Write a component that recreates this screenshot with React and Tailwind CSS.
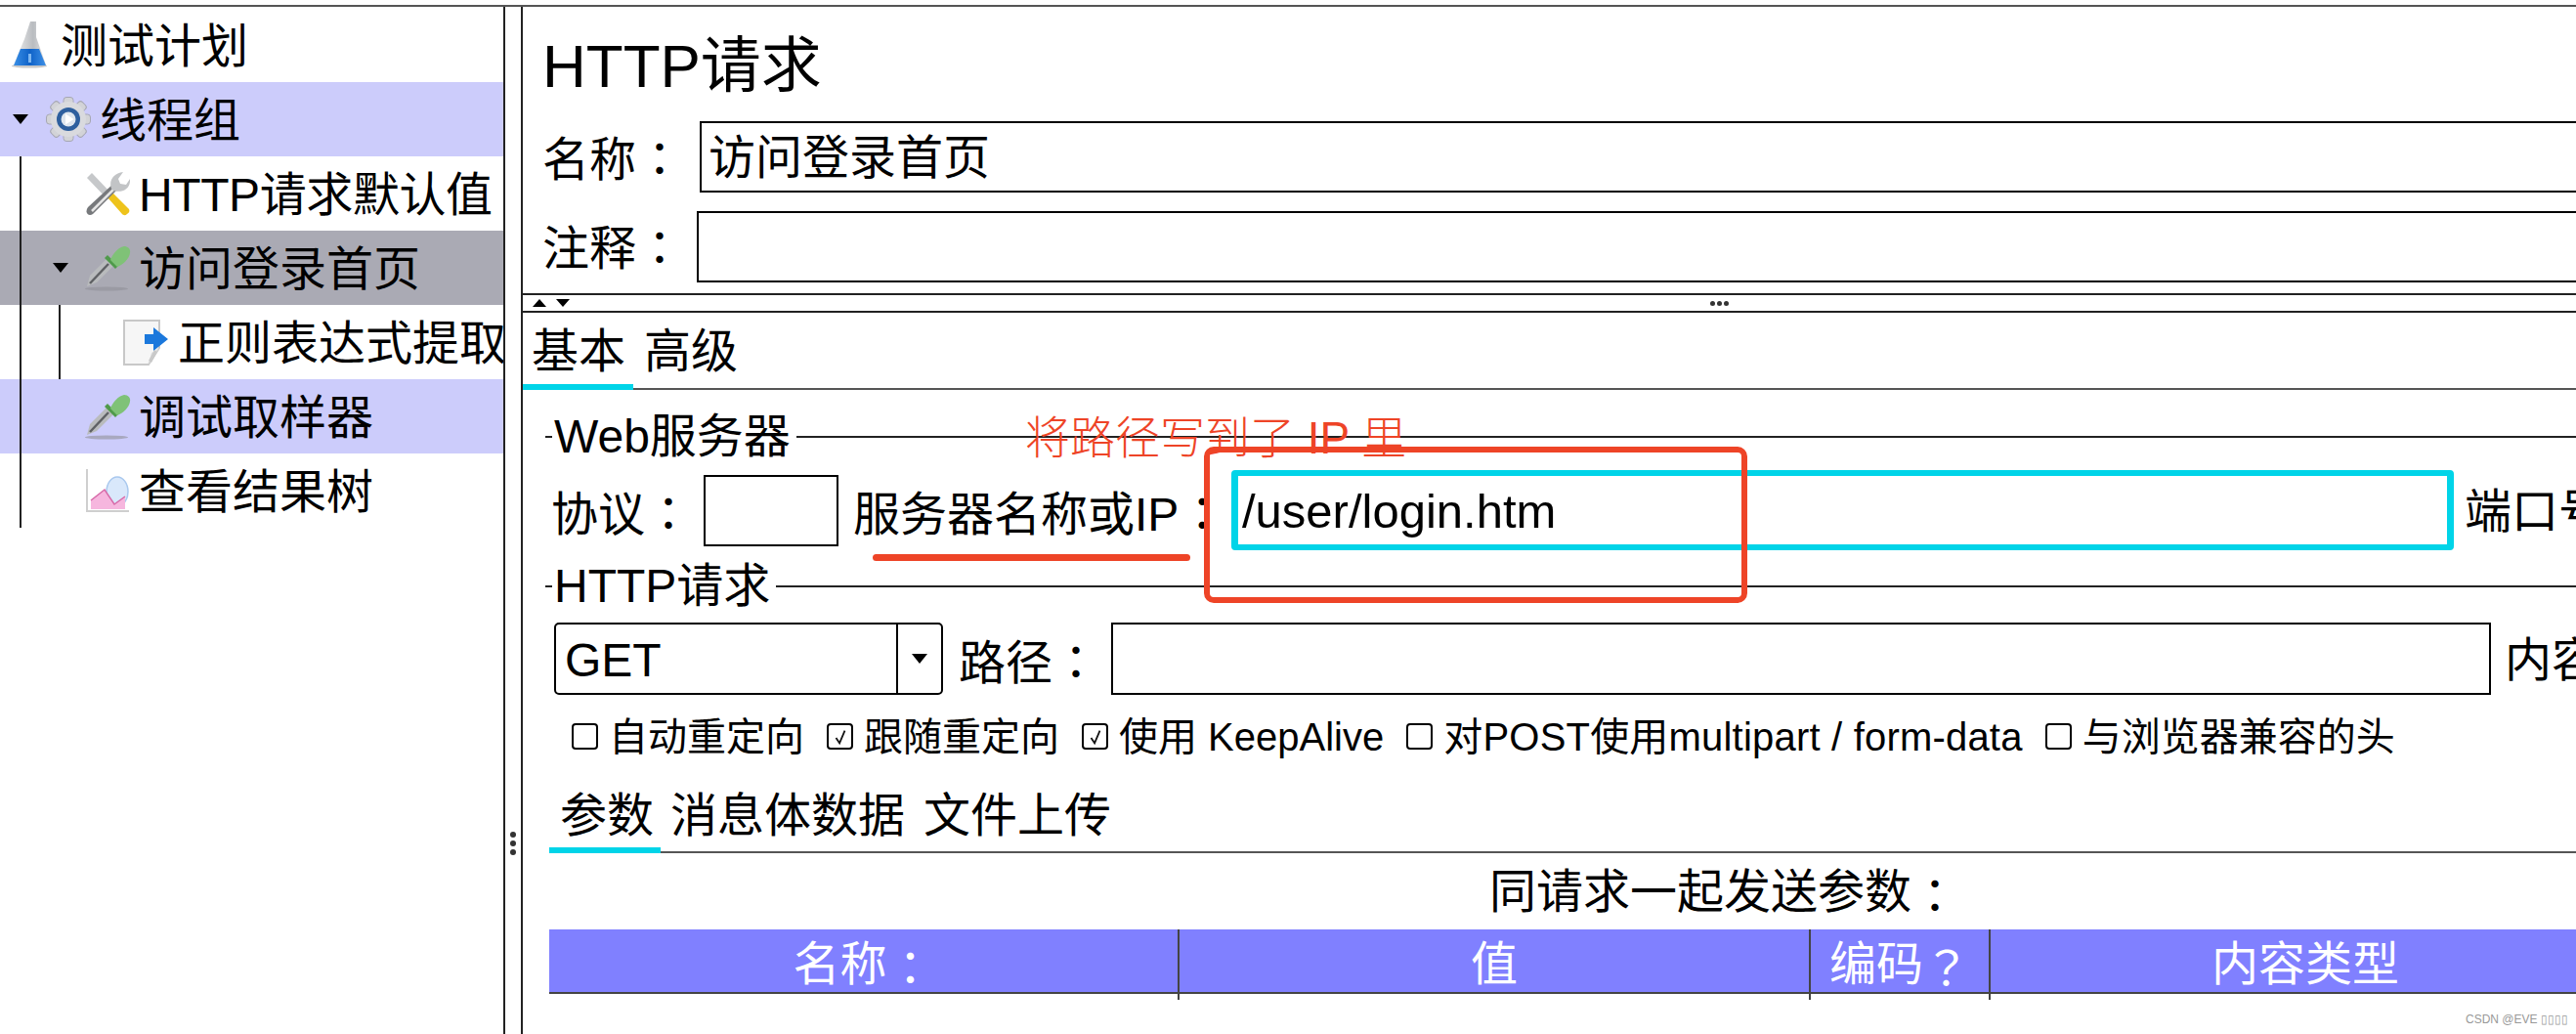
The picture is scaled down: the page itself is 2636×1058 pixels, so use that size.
import React from "react";

const Colon = () => <span className="font-['Noto_Sans_CJK_TC']">：</span>;

const CaretDown = ({ className = "" }) => (
  <span
    className={`block w-0 h-0 border-x-[8px] border-t-[10px] border-x-transparent border-t-black ${className}`}
  />
);

const FlaskIcon = () => (
  <svg viewBox="0 0 36 48" className="w-[36px] h-[48px] mr-[14px] shrink-0 blur-[0.5px]">
    <defs>
      <linearGradient id="glass" x1="0" x2="1">
        <stop offset="0" stopColor="#f2f2f2" />
        <stop offset="0.6" stopColor="#b9bcc0" />
        <stop offset="1" stopColor="#e6e6e6" />
      </linearGradient>
      <linearGradient id="liquid" x1="0" x2="1">
        <stop offset="0" stopColor="#3a8fe6" />
        <stop offset="0.5" stopColor="#0f62c8" />
        <stop offset="1" stopColor="#3d8fe6" />
      </linearGradient>
    </defs>
    <ellipse cx="18" cy="45.5" rx="18" ry="2" fill="#c8c8c8" />
    <path d="M19 0h6v16l10 28H2l11-26z" fill="url(#glass)" />
    <path d="M9 28h19l7 17H2z" fill="url(#liquid)" />
    <rect x="17" y="33" width="3" height="9" fill="#7db6f0" />
  </svg>
);

const GearIcon = () => (
  <svg viewBox="0 0 46 46" className="w-[46px] h-[46px] mr-[9px] shrink-0 blur-[0.5px]">
    <g fill="#d2d3d7" stroke="#a6a7b4" strokeWidth="1">
      <rect x="18" y="0.5" width="10" height="45" rx="3" />
      <rect x="0.5" y="18" width="45" height="10" rx="3" />
      <rect x="18" y="0.5" width="10" height="45" rx="3" transform="rotate(45 23 23)" />
      <rect x="18" y="0.5" width="10" height="45" rx="3" transform="rotate(-45 23 23)" />
    </g>
    <circle cx="23" cy="23" r="18" fill="#d9dade" />
    <circle cx="23" cy="23" r="12" fill="#2e5f9e" />
    <circle cx="23" cy="23" r="7.5" fill="#dfe6ee" />
    <path d="M20 17.5l8.5 5.5-8.5 5.5z" fill="#ffffff" />
  </svg>
);

const ToolsIcon = () => (
  <svg viewBox="0 0 46 47" className="w-[46px] h-[47px] mr-[9px] shrink-0 blur-[0.5px]">
    <path d="M2 7l5-5 21 22-5 5z" fill="#c6c8ca" />
    <path d="M23 27l5-5 17 17c1 2 0 4-2 5-2 2-4 1-5 0z" fill="#eec31c" />
    <path d="M3 37l27-25 5 5-27 27c-4 3-9-1-5-7z" fill="#77797c" />
    <path d="M7 41l25-25" stroke="#e5e5e5" strokeWidth="2.5" />
    <path d="M27 18c-3-8 2-16 12-17l-5 7 2 5 6 1 4-6c1 10-8 15-17 12z" fill="#c2c4c6" />
  </svg>
);

const DropperIcon = () => (
  <svg viewBox="0 0 47 47" className="w-[47px] h-[47px] mr-[8px] shrink-0 blur-[0.5px]">
    <ellipse cx="22" cy="44.5" rx="22" ry="2" fill="#8f8f98" opacity="0.6" />
    <path d="M2 42l3-11 18-18 7 7-18 18z" fill="#b9bbbd" />
    <path d="M5 39l19-20" stroke="#5f6164" strokeWidth="2.5" />
    <path d="M20 13l3-3 11 11-3 3z" fill="#4f9a4b" />
    <path d="M26 15c2-6 8-13 14-14 4 0 7 3 6 7-1 6-7 12-13 14z" fill="#7fc277" />
  </svg>
);

const DocIcon = () => (
  <svg viewBox="0 0 47 47" className="w-[47px] h-[47px] mr-[9px] shrink-0 blur-[0.5px]">
    <path d="M1 1h36v28L26 46H1z" fill="#f6f6f6" stroke="#c8c8c8" strokeWidth="2" />
    <path d="M26 46l3-12 8-5z" fill="#dddddd" />
    <path d="M22 15h9V8l15 12-15 12v-7h-9z" fill="#1b78dc" />
    <path d="M26 42l6-11 3 2-6 11z" fill="#c9c9c9" />
  </svg>
);

const ChartIcon = () => (
  <svg viewBox="0 0 46 46" className="w-[46px] h-[46px] mr-[9px] shrink-0 blur-[0.5px]">
    <path d="M2 1v43h43" fill="none" stroke="#cfcfcf" strokeWidth="2" />
    <ellipse cx="33" cy="24" rx="11" ry="15" fill="#d9e8fb" stroke="#a9c8ee" strokeWidth="1.5" />
    <path d="M6 42V33l14-11 10 15 11-8v13z" fill="#f6b6de" />
    <path d="M6 33l14-11 10 15 11-8" fill="none" stroke="#d76aa8" strokeWidth="1.5" />
  </svg>
);

const TreeRow = ({ className = "", children, label }) => (
  <div className={`flex items-center h-[76px] whitespace-nowrap ${className}`}>
    {children}
    <span className="pt-[3px]">{label}</span>
  </div>
);

const Legend = ({ children }) => (
  <div className="flex items-center h-[46px] pl-[23px]">
    <div className="w-[7px] h-[2px] bg-[#222]" />
    <span className="ml-[2px] mr-[6px]">{children}</span>
    <div className="flex-1 h-[2px] bg-[#222]" />
  </div>
);

const Check = ({ checked }) => (
  <span className="flex items-center justify-center w-[27px] h-[27px] mr-[11px] border-2 border-black rounded-[4px] shrink-0">
    {checked && (
      <svg viewBox="0 0 20 20" className="w-[18px] h-[18px]">
        <path d="M5 11l4 6 6-14" fill="none" stroke="#111" strokeWidth="2" />
      </svg>
    )}
  </span>
);

const Option = ({ checked, children }) => (
  <div className="flex items-center whitespace-nowrap">
    <Check checked={checked} />
    <span className="pt-[1px]">{children}</span>
  </div>
);

const HeadCell = ({ children, last }) => (
  <div className={`flex items-center justify-center text-white ${last ? "" : "border-r-2 border-[#444]"}`}>
    {children}
  </div>
);

export default function App() {
  return (
    <div className="relative w-[2636px] h-[1058px] overflow-hidden bg-white text-black pt-[5px] font-['Liberation_Sans','Noto_Sans_CJK_SC',sans-serif]">
      <div className="flex h-full border-t-2 border-[#555]">
        {/* tree */}
        <div className="relative w-[517px] shrink-0 border-r-2 border-[#222] overflow-hidden text-[48px] pt-px">
          <TreeRow label="测试计划" className="pl-[12px]">
            <FlaskIcon />
          </TreeRow>
          <TreeRow label="线程组" className="pl-[13px] bg-[#ccccfb]">
            <CaretDown className="mr-[18px]" />
            <GearIcon />
          </TreeRow>
          <TreeRow label="HTTP请求默认值" className="pl-[87px] tracking-[-0.4px]">
            <ToolsIcon />
          </TreeRow>
          <TreeRow label="访问登录首页" className="pl-[54px] bg-[#aaaab4]">
            <CaretDown className="mr-[17px]" />
            <DropperIcon />
          </TreeRow>
          <TreeRow label="正则表达式提取" className="pl-[126px]">
            <DocIcon />
          </TreeRow>
          <TreeRow label="调试取样器" className="pl-[87px] bg-[#ccccfb]">
            <DropperIcon />
          </TreeRow>
          <TreeRow label="查看结果树" className="pl-[87px]">
            <ChartIcon />
          </TreeRow>
          <div className="absolute left-[20px] top-[153px] w-[2px] h-[380px] bg-[#222]" />
          <div className="absolute left-[60px] top-[305px] w-[2px] h-[76px] bg-[#222]" />
        </div>

        {/* splitter */}
        <div className="w-[16px] shrink-0 flex flex-col items-center gap-[3px] pt-[844px]">
          <div className="w-[6px] h-[6px] rounded-full bg-[#333]" />
          <div className="w-[6px] h-[6px] rounded-full bg-[#333]" />
          <div className="w-[6px] h-[6px] rounded-full bg-[#333]" />
        </div>

        {/* request form */}
        <div className="flex-1 min-w-0 border-l-2 border-[#222] text-[48px]">
          <div className="flex items-center h-[117px] pl-[20px] pt-[3px] text-[62px] whitespace-nowrap">HTTP请求</div>

          <div className="flex items-center pl-[20px] h-[73px]">
            <span className="w-[161px] shrink-0 pt-[2px]">名称<Colon /></span>
            <div className="w-[2000px] shrink-0 h-full border-2 border-black flex items-center pl-[7px] pt-[2px]">访问登录首页</div>
          </div>
          <div className="flex items-center pl-[20px] h-[73px] mt-[19px]">
            <span className="w-[158px] shrink-0">注释<Colon /></span>
            <div className="w-[2000px] shrink-0 h-full border-2 border-black" />
          </div>

          {/* horizontal splitter */}
          <div className="flex items-center h-[20px] mt-[11px] border-y-2 border-[#222] pl-[10px]">
            <span className="block w-0 h-0 border-x-[7px] border-b-[8px] border-x-transparent border-b-black" />
            <span className="block w-0 h-0 ml-[10px] border-x-[7px] border-t-[8px] border-x-transparent border-t-black" />
            <div className="flex gap-[2px] ml-[1167px]">
              <div className="w-[5px] h-[5px] rounded-full bg-[#333]" />
              <div className="w-[5px] h-[5px] rounded-full bg-[#333]" />
              <div className="w-[5px] h-[5px] rounded-full bg-[#333]" />
            </div>
          </div>

          {/* basic / advanced */}
          <div className="flex h-[79px] border-b-2 border-[#555]">
            <div className="flex items-center h-[79px] w-[113px] pl-[9px] pt-[7px] border-b-[6px] border-[#00d4e8]">基本</div>
            <div className="flex items-center h-[79px] ml-[11px] pt-[1px] pb-[6px] mt-[3px]">高级</div>
          </div>

          <div className="mt-[25px]">
            <Legend>Web服务器</Legend>
          </div>
          <div className="flex items-center h-[82px] mt-[11px] pl-[29px] whitespace-nowrap">
            <span className="w-[156px] shrink-0 pt-[4px]">协议<Colon /></span>
            <div className="w-[138px] h-[73px] shrink-0 border-2 border-black" />
            <span className="w-[402px] shrink-0 pl-[15px] pt-[4px]">服务器名称或IP<Colon /></span>
            <div className="flex items-center w-[1251px] h-[82px] shrink-0 pl-[4px] pt-[3px] border-x-[7px] border-y-[6px] border-[#00d4e8] rounded-[4px] text-[49px]">
              /user/login.htm
            </div>
            <span className="ml-[11px] pt-[4px]">端口号</span>
          </div>

          <div className="mt-[14px]">
            <Legend>HTTP请求</Legend>
          </div>
          <div className="flex items-center h-[74px] mt-[14px] pl-[32px] whitespace-nowrap">
            <div className="flex w-[398px] h-full shrink-0 border-2 border-black rounded-[5px]">
              <div className="flex items-center w-[350px] pl-[9px] pt-[4px] border-r-2 border-black">GET</div>
              <div className="flex flex-1 items-center justify-center">
                <CaretDown />
              </div>
            </div>
            <span className="w-[156px] ml-[16px] shrink-0 pt-[4px]">路径<Colon /></span>
            <div className="w-[1412px] h-full shrink-0 border-2 border-black" />
            <span className="ml-[14px] pt-[4px]">内容</span>
          </div>

          <div className="flex items-center h-[35px] mt-[25px] pl-[50px] gap-[23px] text-[40px]">
            <Option>自动重定向</Option>
            <Option checked>跟随重定向</Option>
            <Option checked>使用 KeepAlive</Option>
            <Option>
              <span className="tracking-[0.2px]">对POST使用multipart / form-data</span>
            </Option>
            <Option>与浏览器兼容的头</Option>
          </div>

          {/* parameters */}
          <div className="flex h-[74px] mt-[28px] ml-[27px] border-b-2 border-[#555] whitespace-nowrap">
            <div className="flex items-center h-[74px] w-[114px] pl-[11px] pt-[4px] border-b-[6px] border-[#00d4e8]">参数</div>
            <div className="flex items-center h-[68px] pt-[4px] ml-[10px]">消息体数据</div>
            <div className="flex items-center h-[68px] pt-[4px] ml-[19px]">文件上传</div>
          </div>
          <div className="flex items-center h-[44px] mt-[16px] ml-[989px] pt-[4px] whitespace-nowrap">
            同请求一起发送参数<Colon />
          </div>
          <div className="grid grid-cols-[645px_646px_184px_644px] w-[2119px] h-[66px] mt-[18px] ml-[27px] bg-[#8080ff] border-b-2 border-[#444]">
            <HeadCell>名称<Colon /></HeadCell>
            <HeadCell>值</HeadCell>
            <HeadCell>编码<span className="font-['Noto_Sans_CJK_TC']">？</span></HeadCell>
            <HeadCell last>内容类型</HeadCell>
          </div>
        </div>
      </div>

      {/* annotations drawn over the screenshot */}
      <div className="absolute left-[1049px] top-[414px] text-[46px] font-light text-[#ee4427] whitespace-nowrap">
        将路径写到了 IP 里
      </div>
      <div className="absolute left-[1232px] top-[457px] w-[556px] h-[160px] border-[6px] border-[#ee4427] rounded-[10px]" />
      <div className="absolute left-[893px] top-[567px] w-[325px] h-[7px] rounded-full bg-[#ee4427]" />
      <div className="absolute left-[2523px] top-[1036px] text-[12px] leading-[14px] text-[#999] whitespace-nowrap">
        CSDN @EVE ▯▯▯▯
      </div>
    </div>
  );
}
